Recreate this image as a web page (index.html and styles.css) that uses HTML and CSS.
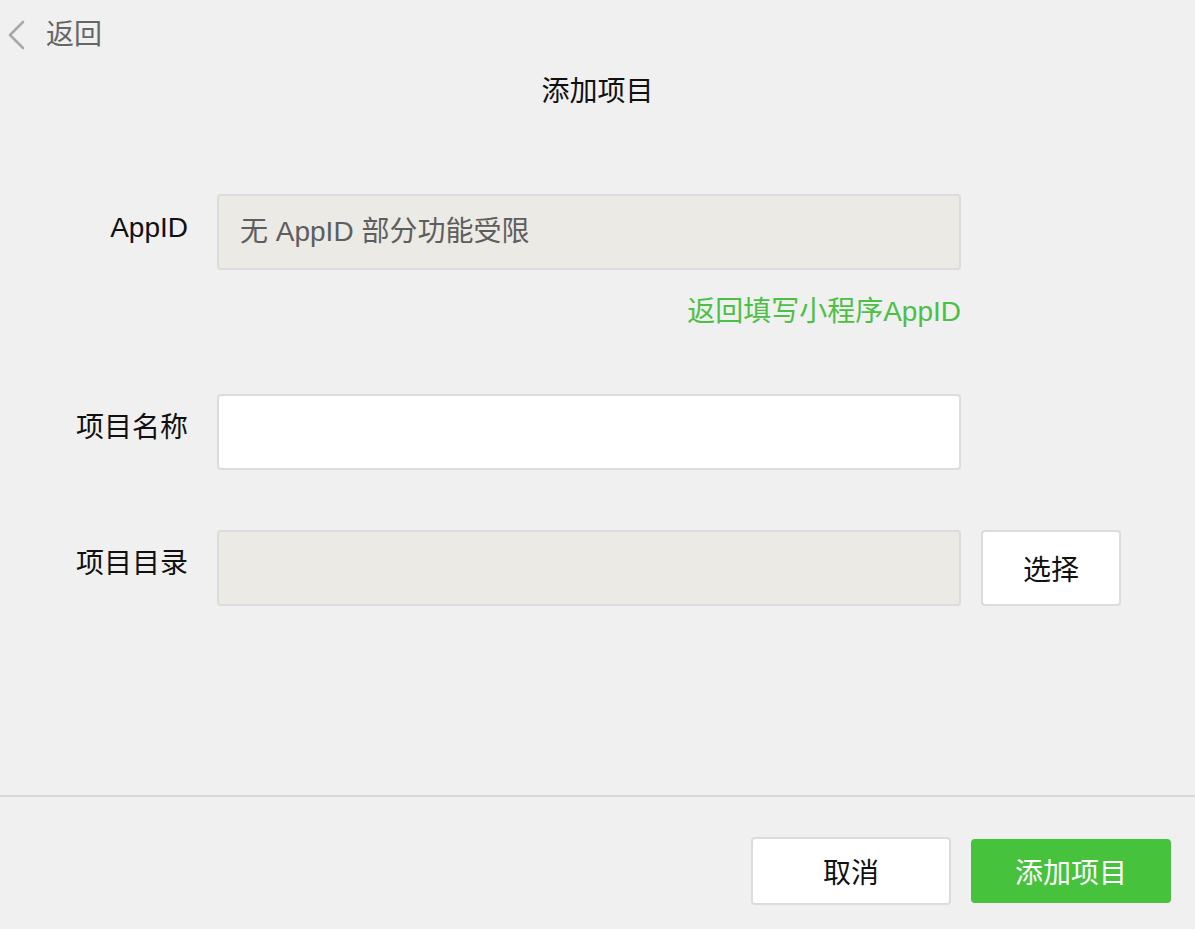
FILE: index.html
```html
<!DOCTYPE html>
<html lang="zh-CN">
<head>
<meta charset="utf-8">
<title>添加项目</title>
<link rel="stylesheet" href="styles.css">
</head>
<body>
<div class="page">
  <main class="main">
    <div class="back-bar">
      <svg class="back-icon" width="20" height="30" viewBox="0 0 20 30"><polyline points="16,2 3,15 16,28" fill="none" stroke="#a8a8a8" stroke-width="2.6" stroke-linecap="round" stroke-linejoin="round"/></svg>
      <span class="back-text">返回</span>
    </div>
    <h1 class="title">添加项目</h1>
    <div class="form">
      <div class="row">
        <label class="label">AppID</label>
        <div class="field-col">
          <input class="input input-disabled" type="text" placeholder="无 AppID 部分功能受限" disabled>
          <a class="link">返回填写小程序AppID</a>
        </div>
      </div>
      <div class="row row-name">
        <label class="label">项目名称</label>
        <div class="field-col">
          <input class="input" type="text">
        </div>
      </div>
      <div class="row row-dir">
        <label class="label">项目目录</label>
        <div class="field-col">
          <input class="input input-disabled" type="text" disabled>
        </div>
        <button class="btn btn-select">选择</button>
      </div>
    </div>
  </main>
  <footer class="footer">
    <button class="btn btn-cancel">取消</button>
    <button class="btn btn-primary">添加项目</button>
  </footer>
</div>
</body>
</html>
```
FILE: styles.css
```css
* { box-sizing: border-box; }
html, body {
  margin: 0;
  padding: 0;
  background: #f0f0f0;
}
body {
  font-family: "Liberation Sans", "Noto Sans CJK SC", sans-serif;
  font-size: 28px;
  color: #111;
}
.page {
  height: 929px;
  display: flex;
  flex-direction: column;
}
.main {
  flex: 1;
}
.back-bar {
  height: 68px;
  display: flex;
  align-items: center;
  padding-left: 7px;
  padding-top: 1px;
}
.back-icon {
  display: block;
  margin-right: 19px;
}
.back-text {
  color: #666;
  line-height: 28px;
}
.title {
  margin: 0;
  font-size: 28px;
  font-weight: normal;
  line-height: 48px;
  text-align: center;
  color: #111;
}
.form {
  margin-top: 78px;
}
.row {
  display: flex;
  align-items: flex-start;
}
.label {
  width: 188px;
  text-align: right;
  margin-top: 20px;
  line-height: 28px;
  margin-right: 29px;
  color: #111;
}
.field-col {
  width: 744px;
  display: flex;
  flex-direction: column;
}
.input {
  width: 744px;
  height: 76px;
  border: 2px solid #dcdcdc;
  border-radius: 4px;
  background: #fff;
  font-family: "Liberation Sans", "Noto Sans CJK SC", sans-serif;
  font-size: 28px;
  padding: 0 21px;
  outline: none;
  color: #333;
}
.input-disabled {
  background: #ebeae5;
}
.input::placeholder {
  color: #5e5e5e;
  opacity: 1;
}
.link {
  align-self: flex-end;
  margin-top: 28px;
  line-height: 28px;
  color: #4cbf45;
}
.row-name {
  margin-top: 68px;
}
.row-dir {
  margin-top: 60px;
}
.btn {
  font-family: "Liberation Sans", "Noto Sans CJK SC", sans-serif;
  font-size: 28px;
  border-radius: 4px;
  cursor: pointer;
}
.btn-select {
  margin-left: 20px;
  width: 140px;
  height: 76px;
  background: #fff;
  border: 2px solid #dcdcdc;
  color: #111;
}
.footer {
  height: 134px;
  border-top: 2px solid #d8d8d8;
  display: flex;
  justify-content: flex-end;
  align-items: flex-start;
  padding: 40px 24px 0 0;
  gap: 20px;
}
.btn-cancel {
  width: 200px;
  height: 68px;
  background: #fff;
  border: 2px solid #dcdcdc;
  color: #111;
}
.btn-primary {
  margin-top: 2px;
  width: 200px;
  height: 64px;
  background: #46c23c;
  border: none;
  color: #fff;
}
```
